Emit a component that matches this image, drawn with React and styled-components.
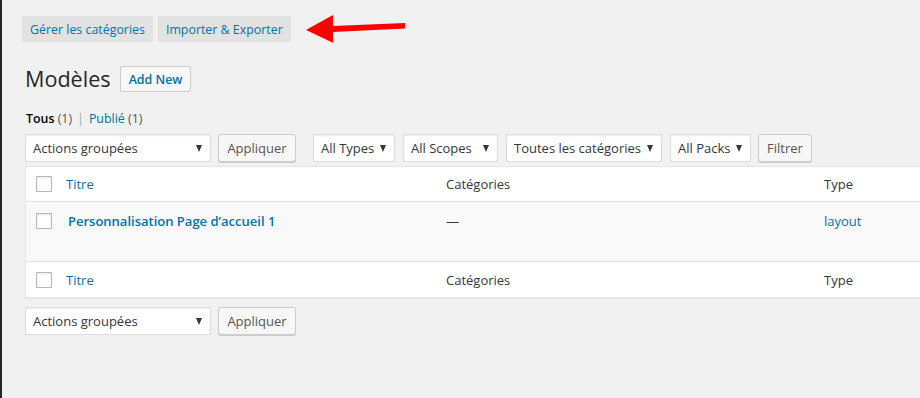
import React from "react";
import styled, { createGlobalStyle } from "styled-components";

const Global = createGlobalStyle`
  html, body { margin: 0; padding: 0; background: #f1f1f1; }
  body {
    font-family: "Open Sans", "Noto Sans", sans-serif;
    font-size: 13px;
    color: #444;
    overflow: hidden;
  }
  * { box-sizing: border-box; }
`;

const Shell = styled.div`
  display: flex;
  min-height: 398px;
`;

const SideStrip = styled.div`
  width: 2px;
  flex-shrink: 0;
  background: #23282d;
`;

const Main = styled.div`
  flex: 1;
  min-width: 0;
  overflow: hidden;
  padding: 16px 0 0 20px;
`;

const TabRow = styled.div`
  display: flex;
  align-items: center;
  gap: 5px;
  height: 26px;
`;

const Tab = styled.a`
  display: flex;
  align-items: center;
  height: 26px;
  padding: 0 8px;
  background: #e2e2e2;
  color: #0073aa;
  font-size: 12.4px;
  text-decoration: none;
  white-space: nowrap;
`;

const Arrow = styled.svg`
  margin-left: 0;
  flex-shrink: 0;
`;

const Body = styled.div`
  margin-left: 3px;
`;

const HeadingRow = styled.div`
  display: flex;
  align-items: center;
  margin-top: 24px;
  height: 26px;
`;

const Title = styled.h1`
  margin: 0;
  font-size: 21.6px;
  font-weight: 400;
  line-height: 1;
  color: #23282d;
`;

const AddNew = styled.a`
  display: flex;
  align-items: center;
  height: 26px;
  margin-left: 9px;
  padding: 0 8px;
  border: 1px solid #ccc;
  border-radius: 2px;
  background: #f7f7f7;
  color: #0073aa;
  font-size: 12.4px;
  font-weight: 600;
  text-decoration: none;
`;

const SubSub = styled.ul`
  display: flex;
  align-items: center;
  gap: 5px;
  list-style: none;
  margin: 17px 0 0 1px;
  padding: 0;
  height: 18px;
  font-size: 12.4px;
  color: #555;
`;

const SubItem = styled.li`
  color: ${(p) => (p.$current ? "#000" : "#0073aa")};
  font-weight: ${(p) => (p.$current ? 600 : 400)};
`;

const Count = styled.span`
  color: #555;
  font-weight: 400;
`;

const Sep = styled.li`
  color: #a0a5aa;
`;

const ActionRow = styled.div`
  display: flex;
  align-items: center;
  height: 28px;
  margin-top: ${(p) => p.$top}px;
`;

const Select = styled.div`
  display: flex;
  align-items: center;
  justify-content: space-between;
  width: ${(p) => p.$w}px;
  height: 28px;
  margin-right: ${(p) => p.$gap}px;
  padding: 0 8px 0 7px;
  background: #fff;
  border: 1px solid #ddd;
  box-shadow: inset 0 1px 2px rgba(0, 0, 0, 0.07);
  color: #32373c;
  font-size: 13px;
  white-space: nowrap;
`;

const Caret = styled.span`
  width: 0;
  height: 0;
  border-left: 3.5px solid transparent;
  border-right: 3.5px solid transparent;
  border-top: 7px solid #32373c;
`;

const Button = styled.button`
  display: flex;
  align-items: center;
  justify-content: center;
  width: ${(p) => p.$w}px;
  height: 28px;
  margin-right: ${(p) => p.$gap || 0}px;
  padding: 0;
  background: #f7f7f7;
  border: 1px solid #ccc;
  border-radius: 3px;
  box-shadow: 0 1px 0 #ccc;
  color: #555;
  font-family: inherit;
  font-size: 13px;
`;

const Table = styled.div`
  width: 960px;
  margin-top: 4px;
  background: #fff;
  border: 1px solid #e5e5e5;
  box-shadow: 0 1px 1px rgba(0, 0, 0, 0.04);
`;

const Row = styled.div`
  display: grid;
  grid-template-columns: 32px 380px 378px 1fr;
  align-items: ${(p) => (p.$body ? "start" : "center")};
  height: ${(p) => p.$h}px;
  background: ${(p) => (p.$body ? "#f9f9f9" : "#fff")};
  border-bottom: ${(p) => (p.$last ? "none" : "1px solid #e1e1e1")};
  padding-top: ${(p) => (p.$body ? 9 : 0)}px;
`;

const CheckCell = styled.div`
  display: flex;
  padding-left: 10px;
  padding-top: ${(p) => (p.$body ? 2 : 0)}px;
`;

const Check = styled.span`
  display: block;
  width: 16px;
  height: 16px;
  border: 1px solid #b4b9be;
  background: #fff;
  box-shadow: inset 0 1px 2px rgba(0, 0, 0, 0.1);
`;

const Cell = styled.div`
  padding-left: ${(p) => (p.$strong ? 10 : 8)}px;
  font-size: 13px;
  line-height: 20px;
  color: ${(p) => (p.$link ? "#0073aa" : "#32373c")};
  font-weight: ${(p) => (p.$strong ? 600 : 400)};
  white-space: nowrap;
`;

function HeaderRow({ last }) {
  return (
    <Row $h={35} $last={last}>
      <CheckCell>
        <Check />
      </CheckCell>
      <Cell $link>Titre</Cell>
      <Cell>Catégories</Cell>
      <Cell>Type</Cell>
    </Row>
  );
}

function BulkRow({ top, filters }) {
  return (
    <ActionRow $top={top}>
      <Select $w={186} $gap={7}>
        Actions groupées <Caret />
      </Select>
      <Button $w={78} $gap={filters ? 17 : 0}>
        Appliquer
      </Button>
      {filters && (
        <>
          <Select $w={82} $gap={8}>
            All Types <Caret />
          </Select>
          <Select $w={95} $gap={8}>
            All Scopes <Caret />
          </Select>
          <Select $w={156} $gap={8}>
            Toutes les catégories <Caret />
          </Select>
          <Select $w={81} $gap={7}>
            All Packs <Caret />
          </Select>
          <Button $w={54}>Filtrer</Button>
        </>
      )}
    </ActionRow>
  );
}

export default function App() {
  return (
    <>
      <Global />
      <Shell>
        <SideStrip />
        <Main>
          <TabRow>
            <Tab>Gérer les catégories</Tab>
            <Tab>Importer &amp; Exporter</Tab>
            <Arrow width="110" height="28" viewBox="0 0 110 28">
              <polygon
                points="10,15 37,0 37,11 109,8 109,13.5 37,17 37,27.7"
                fill="#ff0000"
              />
            </Arrow>
          </TabRow>
          <Body>
            <HeadingRow>
              <Title>Modèles</Title>
              <AddNew>Add New</AddNew>
            </HeadingRow>
            <SubSub>
              <SubItem $current>
                Tous <Count>(1)</Count>
              </SubItem>
              <Sep>|</Sep>
              <SubItem>
                Publié <Count>(1)</Count>
              </SubItem>
            </SubSub>
            <BulkRow top={7} filters />
            <Table>
              <HeaderRow />
              <Row $body $h={60}>
                <CheckCell $body>
                  <Check />
                </CheckCell>
                <Cell $link $strong>
                  Personnalisation Page d’accueil 1
                </Cell>
                <Cell>—</Cell>
                <Cell $link>layout</Cell>
              </Row>
              <HeaderRow last />
            </Table>
            <BulkRow top={9} />
          </Body>
        </Main>
      </Shell>
    </>
  );
}
